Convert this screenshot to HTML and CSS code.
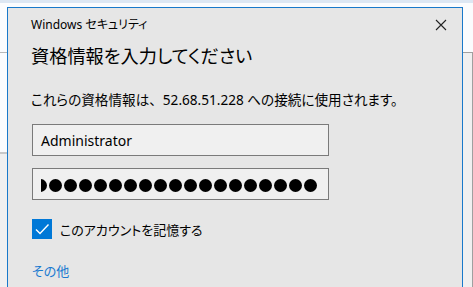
FILE: index.html
```html
<!DOCTYPE html>
<html lang="ja">
<head>
<meta charset="utf-8">
<link rel="stylesheet" href="styles.css">
</head>
<body>
<div class="dialog">
  <div class="titlebar">
    <span class="title">Windows セキュリティ</span>
    <svg class="close" width="12" height="12" viewBox="0 0 12 12"><path d="M1 1 L11 11 M11 1 L1 11" stroke="#222" stroke-width="1.1" fill="none"/></svg>
  </div>
  <h1 class="heading">資格情報を入力してください</h1>
  <p class="desc">これらの資格情報は<span class="fw">、</span>52.68.51.228 への接続に使用されます。</p>
  <div class="field"><span class="value">Administrator</span></div>
  <div class="field pw">
    <div class="dots-clip">
      <div class="dots">
        <i></i><i></i><i></i><i></i><i></i><i></i><i></i><i></i><i></i><i></i><i></i><i></i><i></i><i></i><i></i><i></i><i></i><i></i><i></i>
      </div>
    </div>
  </div>
  <label class="check">
    <span class="box"><svg width="20" height="20" viewBox="0 0 20 20"><path d="M4 10.5 L8 14.5 L16.5 5.5" stroke="#fff" stroke-width="1.4" fill="none"/></svg></span>
    <span class="label">このアカウントを記憶する</span>
  </label>
  <a class="more">その他</a>
</div>
</body>
</html>
```

FILE: styles.css
```css
html, body {
  margin: 0;
  padding: 0;
  width: 473px;
  height: 287px;
  overflow: hidden;
}
body {
  background:
    linear-gradient(#dde7f3, #dde7f3) 0 0 / 100% 3px no-repeat,
    linear-gradient(#b8b8b8, #b8b8b8) 0 52px / 7px 1px no-repeat,
    linear-gradient(#c8c8c8, #c8c8c8) 0 152px / 7px 2px no-repeat,
    linear-gradient(#f0f0f0, #f0f0f0) 0 154px / 7px 200px no-repeat,
    linear-gradient(#a0a0a0, #a0a0a0) 463px 52px / 10px 1px no-repeat,
    linear-gradient(#f0f0f0, #f0f0f0) 463px 53px / 9px 300px no-repeat,
    linear-gradient(#a0a0a0, #a0a0a0) 472px 53px / 1px 300px no-repeat,
    #fbfcfe;
  font-family: "Noto Sans", "Noto Sans CJK JP", sans-serif;
  font-feature-settings: "palt";
  color: #000;
}
.dialog {
  margin: 7px 0 0 7px;
  width: 456px;
  height: 290px;
  background: #e6e6e6;
  border: 1px solid #1979ca;
  padding: 0 0 0 24px;
  box-sizing: border-box;
  overflow: hidden;
}
.titlebar {
  display: flex;
  align-items: center;
  justify-content: space-between;
  height: 30px;
  padding-top: 2px;
  box-sizing: border-box;
}
.title {
  font-size: 12px;
  margin-left: -1px;
}
.close {
  margin-right: 15px;
  margin-top: 2px;
}
.heading {
  margin: 4px 0 0 -1px;
  font-size: 18.2px;
  font-weight: normal;
  line-height: 28px;
}
.desc {
  margin: 21px 0 0 -1px;
  font-size: 13.6px;
  line-height: 18px;
}
.fw {
  font-feature-settings: normal;
}
.field {
  margin-top: 15px;
  width: 297px;
  height: 32px;
  box-sizing: border-box;
  border: 1px solid #7a7a7a;
  background: #f0f0f0;
  display: flex;
  align-items: center;
  padding-left: 8px;
}
.value {
  font-size: 14px;
}
.pw {
  margin-top: 12px;
}
.dots-clip {
  overflow: hidden;
  width: 278px;
  margin-top: 3px;
}
.dots {
  display: flex;
  gap: 2px;
  margin-left: -7px;
}
.dots i {
  flex: none;
  width: 13px;
  height: 13px;
  border-radius: 50%;
  background: #000;
}
.check {
  display: flex;
  align-items: center;
  margin-top: 19px;
  gap: 8px;
}
.box {
  width: 20px;
  height: 20px;
  background: #0078d7;
  display: block;
}
.box svg { display: block; }
.label {
  font-size: 13px;
}
.more {
  display: block;
  margin-top: 22px;
  font-size: 13px;
  color: #1a7ad0;
}
```
